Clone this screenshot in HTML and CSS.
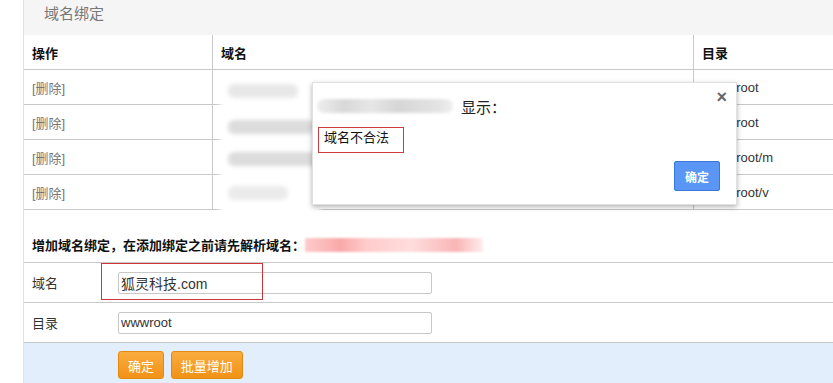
FILE: index.html
```html
<!DOCTYPE html>
<html>
<head>
<title>域名绑定</title>
<meta charset="utf-8">
<link rel="stylesheet" href="styles.css">
</head>
<body>

<div class="panel">
    <div class="panel-title">域名绑定</div>

    <table class="list">
        <tr class="head">
            <td class="c-op">操作</td>
            <td class="c-domain">域名</td>
            <td class="c-dir">目录</td>
        </tr>
        <tr>
            <td class="c-op"><a class="del">[删除]</a></td>
            <td class="c-domain"></td>
            <td class="c-dir">wwwroot</td>
        </tr>
        <tr>
            <td class="c-op"><a class="del">[删除]</a></td>
            <td class="c-domain"></td>
            <td class="c-dir">wwwroot</td>
        </tr>
        <tr>
            <td class="c-op"><a class="del">[删除]</a></td>
            <td class="c-domain"></td>
            <td class="c-dir">wwwroot/m</td>
        </tr>
        <tr>
            <td class="c-op"><a class="del">[删除]</a></td>
            <td class="c-domain"></td>
            <td class="c-dir">wwwroot/v</td>
        </tr>
    </table>

    <div class="blur-col">
        <span class="smudge s1"></span>
        <span class="smudge s2"></span>
        <span class="smudge s3"></span>
        <span class="smudge s4"></span>
    </div>

    <div class="add-title">增加域名绑定，在添加绑定之前请先解析域名：<span class="pink-smudge"></span></div>

    <div class="form-row">
        <label>域名</label>
        <input type="text" class="big" value="狐灵科技.com">
        <span class="mark-input"></span>
    </div>
    <div class="form-row">
        <label>目录</label>
        <input type="text" value="wwwroot">
    </div>
    <div class="form-foot">
        <button type="button" class="btn-orange">确定</button>
        <button type="button" class="btn-orange">批量增加</button>
    </div>

    <div class="dialog">
        <span class="close">×</span>
        <div class="dialog-title"><span class="title-smudge"></span>显示：</div>
        <div class="dialog-msg">域名不合法</div>
        <div class="dialog-foot">
            <button type="button" class="btn-blue">确定</button>
        </div>
    </div>
</div>

</body>
</html>
```

FILE: styles.css
```css
body { margin: 0; overflow: hidden; background: #fff; color: #333; font-family: "Liberation Sans", Arial, "Noto Sans CJK SC", sans-serif; font-size: 13px; }
.panel { position: relative; margin-left: 23px; width: 830px; height: 400px; border-left: 1px solid #e2e2e2; }
.panel-title { height: 35px; line-height: 27px; padding-left: 20px; background: #f5f5f5; color: #777; font-size: 15px; }

.list { width: 100%; border-collapse: collapse; table-layout: fixed; }
.list td { height: 34px; padding: 0 0 0 8px; border-bottom: 1px solid #c8c8c8; vertical-align: middle; }
.list .head td { font-weight: bold; color: #111; }
.c-op { width: 180px; }
.c-domain { width: 472px; border-left: 1px solid #c8c8c8; }
.c-dir { border-left: 1px solid #c8c8c8; color: #333; }
.list tr:not(.head) .c-dir { padding-left: 14px; }
.del { color: #777; }

.blur-col { position: absolute; left: 196px; top: 74px; width: 100px; height: 140px; background: #fff; filter: blur(2px); }
.smudge { position: absolute; left: 8px; height: 14px; background: #dcdcdc; border-radius: 6px; }
.s1 { top: 10px; width: 70px; background: #e8e8e8; }
.s2 { top: 46px; width: 86px; }
.s3 { top: 78px; width: 90px; }
.s4 { top: 112px; width: 60px; background: #ebebeb; }

.add-title { height: 53px; line-height: 18px; padding: 27px 0 0 8px; box-sizing: border-box; border-bottom: 1px solid #c8c8c8; font-weight: bold; color: #111; }
.pink-smudge { display: inline-block; width: 178px; height: 14px; vertical-align: -2px; background: linear-gradient(90deg, #fcc 0, #f9a9a9 20%, #fcc 35%, #fdd 60%, #f9b5b5 85%, #fee 100%); filter: blur(1px); }

.form-row { position: relative; display: flex; align-items: center; height: 39px; border-bottom: 1px solid #c8c8c8; }
.form-row label { width: 94px; padding-left: 8px; box-sizing: border-box; color: #333; }
.form-row input { width: 314px; height: 22px; box-sizing: border-box; border: 1px solid #c8c8c8; border-radius: 2px; padding: 0 2px; font-family: "Liberation Sans", Arial, "Noto Sans CJK SC", sans-serif; font-size: 13px; color: #333; }
.form-row input.big { font-size: 14px; }
.mark-input { position: absolute; left: 77px; top: 0; width: 160px; height: 35px; border: 1px solid #d0353a; }

.form-foot { height: 40px; padding: 8px 0 0 94px; box-sizing: border-box; background: #e3eefc; }
.btn-orange { height: 28px; padding: 0 9px; border: 1px solid #e08a12; border-radius: 3px; background: linear-gradient(#f9ac3f, #f19216); color: #fff; font-family: "Noto Sans CJK SC", sans-serif; font-size: 13px; margin-right: 3px; }

.dialog { position: absolute; left: 288px; top: 82px; width: 425px; height: 123px; box-sizing: border-box; background: #fff; border: 1px solid #e0e0e0; box-shadow: 0 2px 5px rgba(0, 0, 0, 0.3); }
.close { position: absolute; right: 9px; top: 4px; font-size: 18px; font-weight: bold; color: #666; }
.dialog-title { display: flex; align-items: center; height: 20px; margin-top: 13px; font-size: 15px; color: #222; }
.title-smudge { width: 136px; height: 14px; margin: 0 8px 0 4px; background: linear-gradient(90deg, #eee, #d8d8d8 20%, #e6e6e6 40%, #d6d6d6 60%, #e4e4e4 90%, #f0f0f0); border-radius: 7px; filter: blur(1.5px); }
.dialog-msg { width: 86px; height: 26px; margin: 11px 0 0 5px; padding: 2px 0 0 5px; box-sizing: border-box; border: 1px solid #cc3b40; line-height: 16px; color: #111; }
.dialog-foot { display: flex; justify-content: flex-end; padding: 8px 16px 0 0; }
.btn-blue { height: 30px; padding: 0 10px; border: 1px solid #3a78d8; border-radius: 2px; background: #5996f5; color: #fff; font-weight: bold; font-family: "Noto Sans CJK SC", sans-serif; font-size: 12px; }
```
